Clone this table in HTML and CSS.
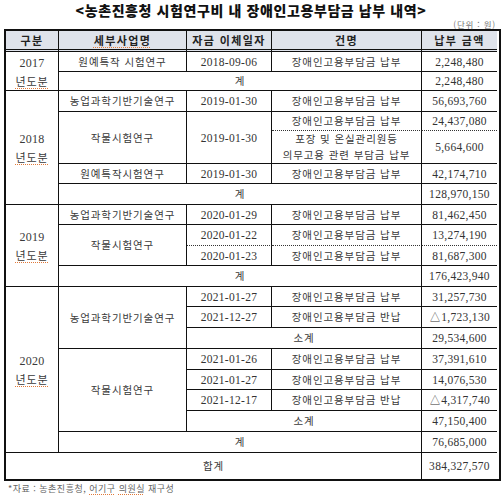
FILE: index.html
```html
<!DOCTYPE html>
<html lang="ko">
<head>
<meta charset="utf-8">
<link rel="stylesheet" href="styles.css">
</head>
<body>
<div class="page">
  <h1 class="title">&lt;농촌진흥청 시험연구비 내 장애인고용부담금 납부 내역&gt;</h1>
  <div class="unit">(단위 : 원)</div>
  <div class="tbl">
    <div class="c hd">구분</div>
    <div class="c hd"><span class="sq">세부사업명</span></div>
    <div class="c hd">자금 이체일자</div>
    <div class="c hd">건명</div>
    <div class="c hd last">납부 금액</div>

    <div class="c yr rs2"><div class="in"><span class="yn">2017</span><br><span class="sq">년도분</span></div></div>
    <div class="c">원예특작 시험연구</div>
    <div class="c num">2018-09-06</div>
    <div class="c">장애인고용부담금 납부</div>
    <div class="c num last">2,248,480</div>
    <div class="c cs3">계</div>
    <div class="c num last">2,248,480</div>

    <div class="c yr rs5"><div class="in"><span class="yn">2018</span><br><span class="sq">년도분</span></div></div>
    <div class="c">농업과학기반기술연구</div>
    <div class="c num">2019-01-30</div>
    <div class="c">장애인고용부담금 납부</div>
    <div class="c num last">56,693,760</div>
    <div class="c rs2">작물시험연구</div>
    <div class="c num rs2">2019-01-30</div>
    <div class="c dot">장애인고용부담금 납부</div>
    <div class="c num last dot">24,437,080</div>
    <div class="c two"><div class="in">포장 및 온실관리원등<br>의무고용 관련 부담금 납부</div></div>
    <div class="c num last">5,664,600</div>
    <div class="c">원예특작시험연구</div>
    <div class="c num">2019-01-30</div>
    <div class="c">장애인고용부담금 납부</div>
    <div class="c num last">42,174,710</div>
    <div class="c cs3">계</div>
    <div class="c num last">128,970,150</div>

    <div class="c yr rs4"><div class="in"><span class="yn">2019</span><br><span class="sq">년도분</span></div></div>
    <div class="c">농업과학기반기술연구</div>
    <div class="c num">2020-01-29</div>
    <div class="c">장애인고용부담금 납부</div>
    <div class="c num last">81,462,450</div>
    <div class="c rs2">작물시험연구</div>
    <div class="c num dot">2020-01-22</div>
    <div class="c dot">장애인고용부담금 납부</div>
    <div class="c num last dot">13,274,190</div>
    <div class="c num">2020-01-23</div>
    <div class="c">장애인고용부담금 납부</div>
    <div class="c num last">81,687,300</div>
    <div class="c cs3">계</div>
    <div class="c num last">176,423,940</div>

    <div class="c yr rs8"><div class="in"><span class="yn">2020</span><br><span class="sq">년도분</span></div></div>
    <div class="c rs3">농업과학기반기술연구</div>
    <div class="c num">2021-01-27</div>
    <div class="c">장애인고용부담금 납부</div>
    <div class="c num last">31,257,730</div>
    <div class="c num">2021-12-27</div>
    <div class="c">장애인고용부담금 반납</div>
    <div class="c num last">△1,723,130</div>
    <div class="c cs2">소계</div>
    <div class="c num last">29,534,600</div>
    <div class="c rs4">작물시험연구</div>
    <div class="c num">2021-01-26</div>
    <div class="c">장애인고용부담금 납부</div>
    <div class="c num last">37,391,610</div>
    <div class="c num">2021-01-27</div>
    <div class="c">장애인고용부담금 납부</div>
    <div class="c num last">14,076,530</div>
    <div class="c num">2021-12-17</div>
    <div class="c">장애인고용부담금 반납</div>
    <div class="c num last">△4,317,740</div>
    <div class="c cs2">소계</div>
    <div class="c num last">47,150,400</div>
    <div class="c cs3">계</div>
    <div class="c num last">76,685,000</div>

    <div class="c cs4 end">합계</div>
    <div class="c num last end">384,327,570</div>
  </div>
  <p class="note">*자료 : 농촌진흥청, <span class="sq">어기구</span> <span class="sq">의원실</span> 재구성</p>
</div>
</body>
</html>
```

FILE: styles.css
```css
html, body {
  margin: 0;
  padding: 0;
  background: #ffffff;
}

.page {
  width: 502px;
  height: 496px;
  font-family: "Liberation Serif", "Noto Sans CJK KR", serif;
  color: #333333;
}

.title {
  margin: 0;
  padding-top: 1px;
  height: 19px;
  font-family: "Noto Sans CJK KR", sans-serif;
  font-weight: 900;
  font-size: 14px;
  line-height: 19px;
  letter-spacing: 0.6px;
  text-align: center;
  color: #111111;
}

.unit {
  height: 9px;
  padding-right: 6px;
  font-family: "Noto Sans CJK KR", sans-serif;
  font-size: 8.5px;
  line-height: 9px;
  text-align: right;
  color: #777777;
  letter-spacing: 0.8px;
}

.tbl {
  margin-left: 4px;
  width: 493px;
  display: grid;
  grid-template-columns: 53px 128px 85px 150px 75px;
  grid-template-rows: 21px 20px 19px 21px 19px 33px 20px 21px 20px 21px 20px 21px 20px 21px 21px 21px 20px 21px 21px 21px 26px;
  border: 2px solid #111111;
}

.c {
  box-sizing: border-box;
  display: flex;
  align-items: center;
  justify-content: center;
  text-align: center;
  border-right: 1px solid #111111;
  border-bottom: 1px solid #111111;
  font-family: "Noto Sans CJK KR", sans-serif;
  font-size: 10.5px;
  letter-spacing: 0.9px;
  line-height: 16px;
  color: #3a3a3a;
  white-space: nowrap;
}

.in {
  display: block;
}

.num {
  font-family: "Liberation Serif", serif;
  font-size: 11.5px;
  letter-spacing: 0.3px;
  color: #333333;
}

.hd {
  background: #dfe3eb;
  border-bottom: 3px double #111111;
  font-weight: 700;
  font-size: 11px;
  letter-spacing: 1.4px;
  color: #222222;
}

.last { border-right: none; }
.end { border-bottom: none; }
.dot { border-bottom: 1px dotted #333333; }

.yr {
  line-height: 18px;
  font-size: 11px;
}

.yn {
  font-family: "Liberation Serif", serif;
  font-size: 12px;
  letter-spacing: 0.3px;
}

.two { line-height: 16px; }

.rs2 { grid-row: span 2; }
.rs3 { grid-row: span 3; }
.rs4 { grid-row: span 4; }
.rs5 { grid-row: span 5; }
.rs8 { grid-row: span 8; }
.cs2 { grid-column: span 2; }
.cs3 { grid-column: span 3; }
.cs4 { grid-column: span 4; }

.sq {
  text-decoration: underline dotted #e07a3a;
  text-underline-offset: 2px;
  text-decoration-thickness: 1px;
}

.note {
  margin: 2px 0 0 8px;
  font-family: "Noto Sans CJK KR", sans-serif;
  font-size: 9px;
  line-height: 12px;
  color: #666666;
  letter-spacing: 0.5px;
}
```
